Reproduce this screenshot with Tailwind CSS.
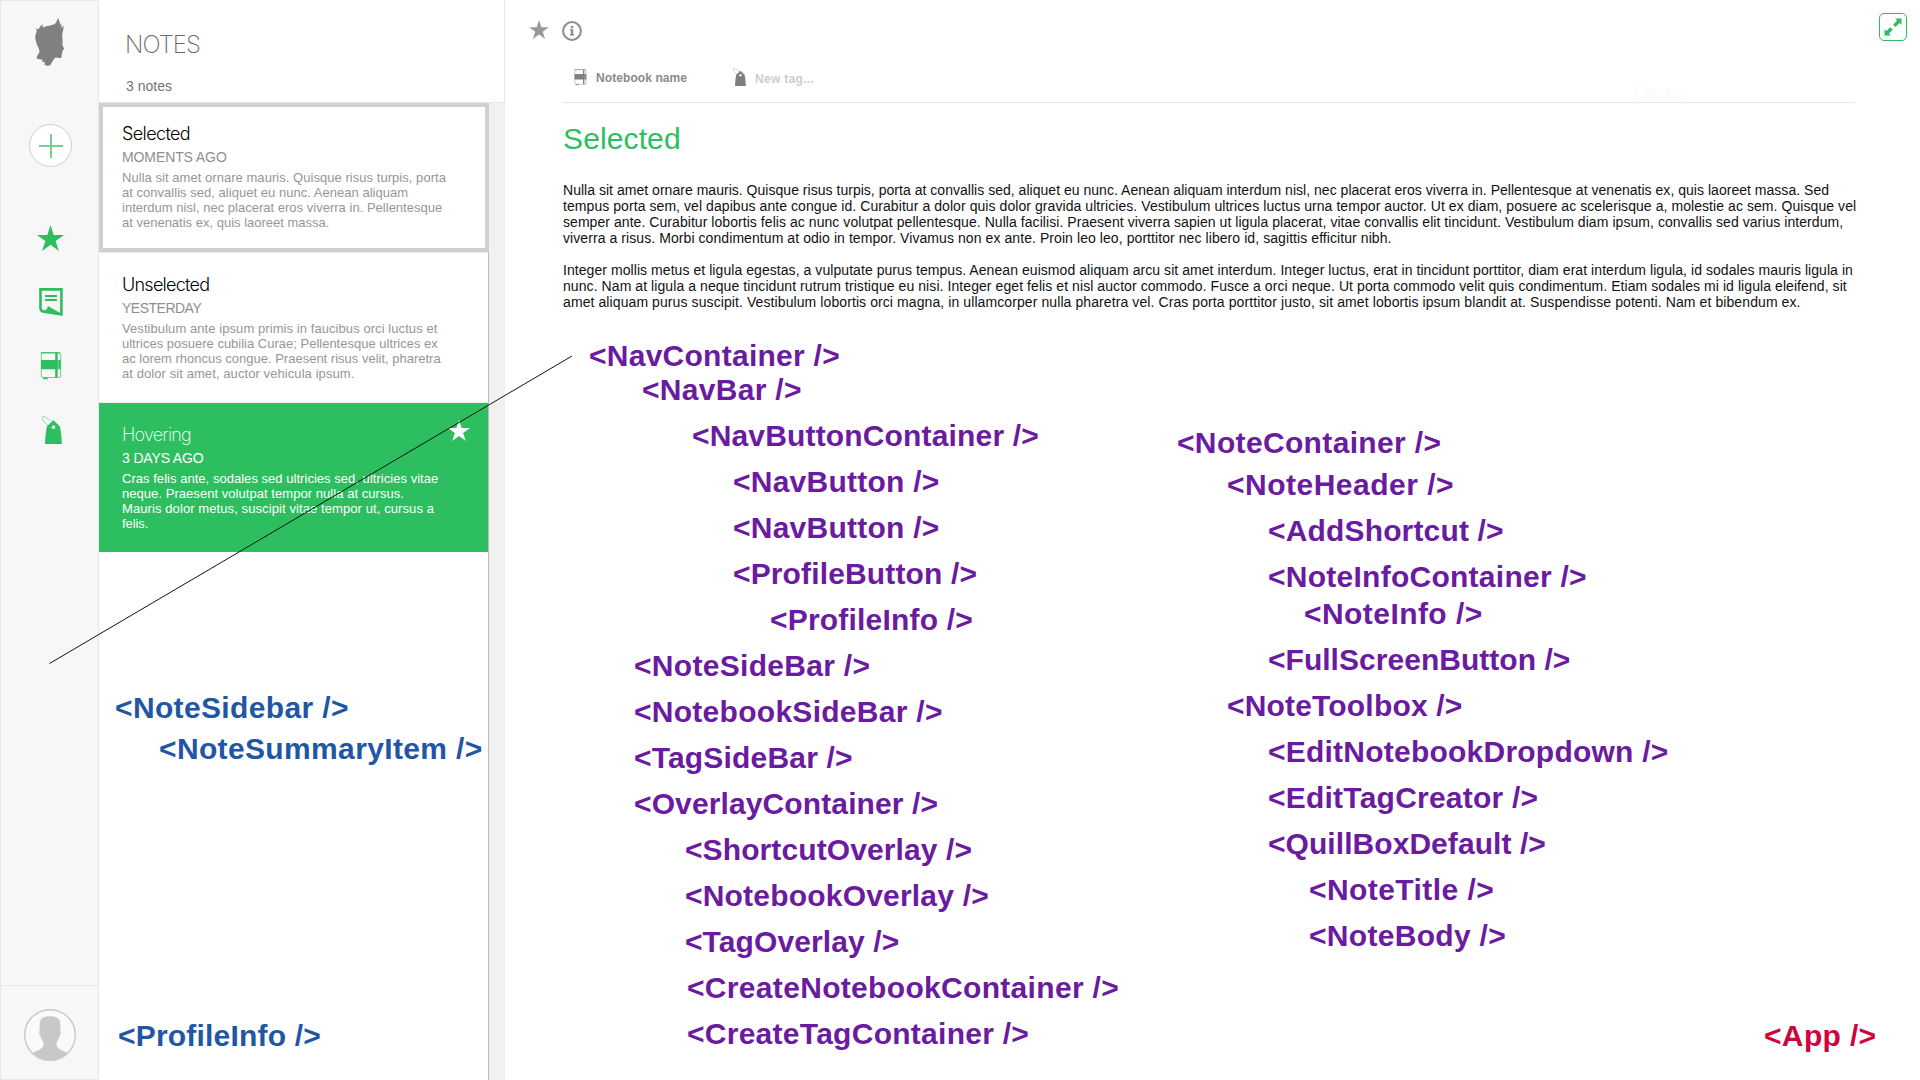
<!DOCTYPE html>
<html lang="en">
<head>
<meta charset="utf-8">
<title>Notes</title>
<script src="https://cdn.jsdelivr.net/npm/@tailwindcss/browser@4"></script>
</head>
<body class="relative flex h-[1080px] w-[1920px] overflow-hidden bg-white font-['Liberation_Sans',Arial,sans-serif] whitespace-nowrap">

<svg class="hidden">
  <symbol id="star" viewBox="0 0 27 26"><path fill="currentColor" d="M13.5 0 16.7 9.9H27l-8.4 6.1 3.3 10-8.4-6.2L5.1 26l3.3-10L0 9.9h10.3z"/></symbol>
  <symbol id="notebook" viewBox="0 0 22 28">
    <path fill="none" stroke="currentColor" stroke-opacity=".7" stroke-width="1" d="M1.500.9h17.200q2 0 2 2v20.600q0 2-2 2H3.300q-2 0-2-2V.9"/>
    <path fill="currentColor" d="M1 .2h19v1.100H1zM1 8h19.700v9.200H1zM15.200.5h2.500v25h-2.500zM3.200 25.500h4.300v2.200l-2.100-1-2.200 1z"/>
    <path stroke="#fff" stroke-opacity=".5" stroke-width=".7" d="M18.300 1v24"/>
  </symbol>
  <symbol id="tag" viewBox="0 0 20 28">
    <ellipse cx="5.600" cy="5.800" rx="7" ry="2.700" transform="rotate(43 5.600 5.800)" fill="none" stroke="currentColor" stroke-opacity=".5" stroke-width=".9"/>
    <path fill="currentColor" fill-rule="evenodd" d="M11.400 4.300 18 10.400Q19.500 18 19.900 28H3Q3.300 18 4.800 10.400zM11.400 9.200a1.900 1.900 0 1 0 0 3.800 1.900 1.900 0 0 0 0-3.800z"/>
  </symbol>
</svg>

<nav class="flex h-full w-[99px] shrink-0 flex-col justify-between border border-[#e8e8e8] bg-[#f7f7f7] text-[#2dbe60]">
  <div class="flex flex-col items-center pt-[17px] pl-[2px]">
    <svg class="h-12 w-[31px] text-[#808080]" viewBox="0 0 31 48">
      <path fill="currentColor" d="M23.300 0c.5 2.400 2 4.300 1.800 7.800l1.300-3c.3 2 .1 3.400-.2 4.800.9-.1 1.800-1 2.300-2.200.5 4.500-1.200 6.500-1.300 9.600l.4 6.500c.1 1.700-.6 3 .2 4.600l1.300 2.400c.2 1-1.600 1.400-1.500 2.200l-.2 1.700-.5 1.200c-.5 1.500.2 2.900-.9 4.100-1.400 1.300-4.300-.8-5.900 0-1.600 1.500-3.600 5-4.800 7.600-2.600.9-5.400.2-6.300-1.400l1-1.400-3.800-1.300 1.500-1.400c-2.100-.4-4.500-.2-5.900-1.200-.8-2.200 1.800-4.100 2.600-6.700.5-2.600-2-5.500-2.800-8.500C.6 22.300-.2 19.700.4 17.300L1.800 13C1.700 11.700 1 11.500.7 10.200c.9.800 2 1 3.300.6C4.300 8.300 6.500 7.600 8.200 6.600 7.500 8 7.700 8.800 7.800 9.600 11.500 7.500 17 7.700 19.600 6 21.900 4.500 21.500 2.300 23.300 0z"/>
      <path fill="#fff" d="m3 41.800 5.200.5L6 43.500zM7.300 44.500l2-.800v2.500z"/>
    </svg>
    <button class="mt-[58px] flex h-[43px] w-[43px] items-center justify-center rounded-full border border-[#cdcdcd] bg-white">
      <svg class="h-6 w-6" viewBox="0 0 24 24"><path stroke="currentColor" stroke-opacity=".68" stroke-width="2" d="M12 0v24M0 12h24"/></svg>
    </button>
    <svg class="mt-[58px] h-[26px] w-[27px]"><use href="#star"/></svg>
    <svg class="mt-[37px] h-7 w-6" viewBox="0 0 24 28">
      <path fill="none" stroke="currentColor" stroke-width="2.600" d="M1.500 1.400h20.900v24.800L5 23.800Q1.500 23.300 1.500 20z"/>
      <path fill="currentColor" d="M6 7h12v2H6zM6 11h12v2H6zM8.800 18l14.200 8v1.500L7.500 25Q4.500 24.500 3 22.500q5.500.500 5.800-4.500z"/>
    </svg>
    <svg class="mt-9 h-7 w-[22px]"><use href="#notebook"/></svg>
    <svg class="mt-9 ml-[2px] h-7 w-5"><use href="#tag"/></svg>
  </div>
  <div class="flex h-[94px] items-center justify-center border-t border-[#e8e8e8] pt-[5px] pl-px">
    <svg class="h-[52px] w-[52px]" viewBox="0 0 52 52">
      <circle cx="26" cy="26" r="25.300" fill="#fafafa" stroke="#c8c8c8" stroke-width="1.400"/>
      <path fill="#c8c8c8" d="M26 7.300c6.800 0 10.300 2.200 10.300 8v6c1 .5.500 4.500-.6 5.500-.8 3.500-2.300 5-3.300 7-.4 6.200 4.500 7 10.800 10A25.300 25.300 0 0 1 26 51.800a25.300 25.300 0 0 1-17.200-8c6.300-3 11.200-3.800 10.800-10-1-2-2.500-3.500-3.300-7-1.100-1-1.600-5-.6-5.500v-6c0-5.800 3.500-8 10.300-8z"/>
    </svg>
  </div>
</nav>

<aside class="flex h-full w-[406px] shrink-0 flex-col">
  <header class="h-[103px] border-r border-b border-[#e6e6e6] pt-[29px] pl-[26px]">
    <h1 class="font-['Inter'] text-[24px] leading-8 font-extralight tracking-[-0.92px] text-[#6a6a6a]">NOTES</h1>
    <p class="mt-[17px] pl-px text-[14px] leading-4 text-[#747474]">3 notes</p>
  </header>
  <div class="flex grow bg-[#f1f1f1]">
    <div class="w-[390px] border-r border-[#bdbdbd] bg-white">
      <article class="h-[149px] w-[390px] border-4 border-[#cfcfcf] pt-[17px] pl-[19px] text-[13px] leading-[15px] text-[#969696]">
        <h2 class="font-['Inter'] text-[18px] leading-5 font-light tracking-[-0.62px] text-black">Selected</h2>
        <p class="mt-[5px] mb-[5px] text-[14px] leading-4 tracking-[-0.1px] text-[#8f8f8f]">MOMENTS AGO</p>
        <p class="tracking-[0.043px]">Nulla sit amet ornare mauris. Quisque risus turpis, porta</p>
        <p class="tracking-[0.028px]">at convallis sed, aliquet eu nunc. Aenean aliquam</p>
        <p class="tracking-[0.015px]">interdum nisl, nec placerat eros viverra in. Pellentesque</p>
        <p>at venenatis ex, quis laoreet massa.</p>
      </article>
      <article class="h-[151px] border-y border-[#ebebeb] pt-[22px] pl-[23px] text-[13px] leading-[15px] text-[#969696]">
        <h2 class="font-['Inter'] text-[18px] leading-5 font-light tracking-[-0.74px] text-black">Unselected</h2>
        <p class="mt-[5px] mb-[5px] text-[14px] leading-4 tracking-[-0.5px] text-[#8f8f8f]">YESTERDAY</p>
        <p class="tracking-[0.072px]">Vestibulum ante ipsum primis in faucibus orci luctus et</p>
        <p>ultrices posuere cubilia Curae; Pellentesque ultrices ex</p>
        <p>ac lorem rhoncus congue. Praesent risus velit, pharetra</p>
        <p class="tracking-[0.082px]">at dolor sit amet, auctor vehicula ipsum.</p>
      </article>
      <article class="flex h-[149px] justify-between bg-[#2dbe60] pt-[17px] pr-[18px] pl-[23px] text-[13px] leading-[15px] text-white">
        <div class="pt-[5px]">
          <h2 class="font-['Inter'] text-[18px] leading-5 font-extralight tracking-[-0.75px]">Hovering</h2>
          <p class="mt-[5px] mb-[5px] text-[14px] leading-4 tracking-[-0.15px]">3 DAYS AGO</p>
          <p class="tracking-[0.033px]">Cras felis ante, sodales sed ultricies sed, ultricies vitae</p>
          <p class="tracking-[0.048px]">neque. Praesent volutpat tempor nulla at cursus.</p>
          <p class="tracking-[0.092px]">Mauris dolor metus, suscipit vitae tempor ut, cursus a</p>
          <p class="tracking-[-0.08px]">felis.</p>
        </div>
        <svg class="h-[21px] w-[22px]"><use href="#star"/></svg>
      </article>
    </div>
  </div>
</aside>

<main class="relative grow">
  <div class="flex items-start justify-between pt-[13px] pr-[13px] pl-[24px]">
    <div class="flex gap-[13px] pt-[7px]">
      <svg class="h-[19px] w-5 text-[#999]"><use href="#star"/></svg>
      <svg class="mt-px h-5 w-5 text-[#8c8c8c]" viewBox="0 0 20 20">
        <circle cx="10" cy="10" r="8.900" fill="none" stroke="currentColor" stroke-width="2"/>
        <path fill="currentColor" d="M8.800 5h2.400v2.200H8.800zM8 8.300h3.200v4.800H12v1.300H8v-1.300h.9V9.600H8z"/>
      </svg>
    </div>
    <button class="flex h-7 w-7 items-center justify-center rounded-[5px] border border-[#2dbe60] text-[#2dbe60]">
      <svg class="h-[18px] w-[18px]" viewBox="0 0 18 18"><path fill="currentColor" d="M17.500.5v6.300L15.600 5l-4.100 4.100-2.400-2.400L13 2.500 11.200.5zM.5 17.500v-6.300L2.400 13l3.800-3.800 2.500 2.500L5 15.600l1.800 1.900z"/></svg>
    </button>
  </div>
  <div class="ml-[57px] flex h-[62px] w-[1293px] border-b border-[#e6e6e6] pt-[27px] pl-3">
    <svg class="mt-px h-[17px] w-[13px] text-[#7f7f7f]" viewBox="0 0 22 28"><use href="#notebook"/></svg>
    <span class="ml-[9px] pt-[3px] text-[12px] leading-[14px] font-bold tracking-[0.08px] text-[#8a8a8a]">Notebook name</span>
    <svg class="ml-[46px] h-[18px] w-[13px] text-[#7f7f7f]"><use href="#tag"/></svg>
    <span class="ml-[9px] pt-1 text-[12px] leading-[14px] font-bold tracking-[0.3px] text-[#cdcdcd]">New tag...</span>
    <span class="ml-[820px] pt-[12px] text-[20px] leading-6 font-['Inter'] font-light tracking-[-0.24px] text-[#fbfbfb]">Demo</span>
  </div>
  <h2 class="mt-[18px] pl-[58px] text-[30px] leading-9 tracking-[0.12px] text-[#2dbe60]">Selected</h2>
  <div class="mt-[25px] flex flex-col gap-4 pl-[58px] text-[14px] leading-4 text-[#111]">
    <div>
      <p class="tracking-[0.026px]">Nulla sit amet ornare mauris. Quisque risus turpis, porta at convallis sed, aliquet eu nunc. Aenean aliquam interdum nisl, nec placerat eros viverra in. Pellentesque at venenatis ex, quis laoreet massa. Sed</p>
      <p class="tracking-[0.067px]">tempus porta sem, vel dapibus ante congue id. Curabitur a dolor quis dolor gravida ultricies. Vestibulum ultrices luctus urna tempor auctor. Ut ex diam, posuere ac scelerisque a, molestie ac sem. Quisque vel</p>
      <p class="tracking-[0.055px]">semper ante. Curabitur lobortis felis ac nunc volutpat pellentesque. Nulla facilisi. Praesent viverra sapien ut ligula placerat, vitae convallis elit tincidunt. Vestibulum diam ipsum, convallis sed varius interdum,</p>
      <p class="tracking-[0.075px]">viverra a risus. Morbi condimentum at odio in tempor. Vivamus non ex ante. Proin leo leo, porttitor nec libero id, sagittis efficitur nibh.</p>
    </div>
    <div>
      <p class="tracking-[0.061px]">Integer mollis metus et ligula egestas, a vulputate purus tempus. Aenean euismod aliquam arcu sit amet interdum. Integer luctus, erat in tincidunt porttitor, diam erat interdum ligula, id sodales mauris ligula in</p>
      <p class="tracking-[0.074px]">nunc. Nam at ligula a neque tincidunt rutrum tristique eu nisi. Integer eget felis et nisl auctor commodo. Fusce a orci neque. Ut porta commodo velit quis condimentum. Etiam sodales mi id ligula eleifend, sit</p>
      <p class="tracking-[0.091px]">amet aliquam purus suscipit. Vestibulum lobortis orci magna, in ullamcorper nulla pharetra vel. Cras porta porttitor justo, sit amet lobortis ipsum blandit at. Suspendisse potenti. Nam et bibendum ex.</p>
    </div>
  </div>

  <!-- component tree -->
  <div class="mt-[29px] flex text-[30px] leading-[34px] font-bold text-[#6a1ba0]">
    <div class="flex w-[672px] flex-col gap-3">
      <div>
        <p class="pl-[84px] tracking-[0.26px]">&lt;NavContainer /&gt;</p>
        <p class="pl-[137px] tracking-[0.3px]">&lt;NavBar /&gt;</p>
      </div>
      <p class="pl-[187px] tracking-[0.16px]">&lt;NavButtonContainer /&gt;</p>
      <p class="pl-[228px] tracking-[0.25px]">&lt;NavButton /&gt;</p>
      <p class="pl-[228px] tracking-[0.25px]">&lt;NavButton /&gt;</p>
      <p class="pl-[228px] tracking-[0.14px]">&lt;ProfileButton /&gt;</p>
      <p class="pl-[265px] tracking-[0.2px]">&lt;ProfileInfo /&gt;</p>
      <p class="pl-[129px] tracking-[0.3px]">&lt;NoteSideBar /&gt;</p>
      <p class="pl-[129px] tracking-[0.28px]">&lt;NotebookSideBar /&gt;</p>
      <p class="pl-[129px] tracking-[0.18px]">&lt;TagSideBar /&gt;</p>
      <p class="pl-[129px] tracking-[0.12px]">&lt;OverlayContainer /&gt;</p>
      <p class="pl-[180px] tracking-[0.1px]">&lt;ShortcutOverlay /&gt;</p>
      <p class="pl-[180px] tracking-[0.2px]">&lt;NotebookOverlay /&gt;</p>
      <p class="pl-[180px] tracking-[0.1px]">&lt;TagOverlay /&gt;</p>
      <p class="pl-[182px] tracking-[0.32px]">&lt;CreateNotebookContainer /&gt;</p>
      <p class="pl-[182px] tracking-[0.27px]">&lt;CreateTagContainer /&gt;</p>
    </div>
    <div class="flex flex-col gap-3 pt-[87px]">
      <div class="flex flex-col gap-2">
        <p class="tracking-[0.35px]">&lt;NoteContainer /&gt;</p>
        <p class="pl-[50px] tracking-[0.5px]">&lt;NoteHeader /&gt;</p>
      </div>
      <p class="pl-[91px] tracking-[0.16px]">&lt;AddShortcut /&gt;</p>
      <div class="flex flex-col gap-[3px]">
        <p class="pl-[91px] tracking-[0.26px]">&lt;NoteInfoContainer /&gt;</p>
        <p class="pl-[127px] tracking-[0.44px]">&lt;NoteInfo /&gt;</p>
      </div>
      <p class="pl-[91px] tracking-[0.03px]">&lt;FullScreenButton /&gt;</p>
      <p class="pl-[50px] tracking-[0.18px]">&lt;NoteToolbox /&gt;</p>
      <p class="pl-[91px] tracking-[0.23px]">&lt;EditNotebookDropdown /&gt;</p>
      <p class="pl-[91px] tracking-[0.23px]">&lt;EditTagCreator /&gt;</p>
      <p class="pl-[91px] tracking-[0.06px]">&lt;QuillBoxDefault /&gt;</p>
      <p class="pl-[132px] tracking-[0.43px]">&lt;NoteTitle /&gt;</p>
      <p class="pl-[132px] tracking-[0.31px]">&lt;NoteBody /&gt;</p>
    </div>
  </div>
</main>

<!-- labels pinned over the panels -->
<div class="absolute top-[691px] left-[115px] text-[30px] leading-[34px] font-bold text-[#1f57a4]">
  <p class="tracking-[0.36px]">&lt;NoteSidebar /&gt;</p>
  <p class="mt-[7px] pl-[44px] tracking-[0.36px]">&lt;NoteSummaryItem /&gt;</p>
</div>
<p class="absolute top-[1019px] left-[118px] text-[30px] leading-[34px] font-bold tracking-[0.2px] text-[#1f57a4]">&lt;ProfileInfo /&gt;</p>
<p class="absolute top-[1019px] left-[1764px] text-[30px] leading-[34px] font-bold tracking-[0.35px] text-[#d0043c]">&lt;App /&gt;</p>
<svg class="pointer-events-none absolute top-0 left-0 h-[700px] w-[600px]" viewBox="0 0 600 700"><path stroke="#111" stroke-width="1" d="M49.500 663.500 572 356"/></svg>

</body>
</html>
